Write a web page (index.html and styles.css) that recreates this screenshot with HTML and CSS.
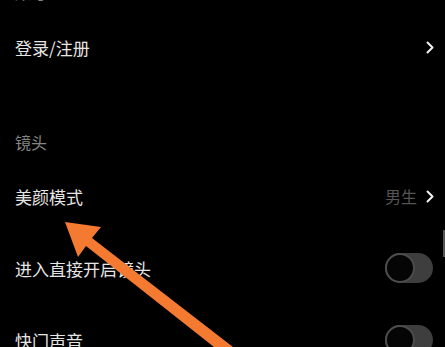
FILE: index.html
```html
<!DOCTYPE html>
<html lang="zh-CN">
<head>
  <meta charset="UTF-8">
  <meta name="viewport" content="width=device-width, initial-scale=1.0">
  <title>设置</title>
  <link rel="stylesheet" href="styles.css">
</head>
<body>
  <div class="settings">
    <div class="section-title top">账号</div>
    <div class="row login">
      <span class="label">登录/注册</span>
      <svg class="chevron" viewBox="0 0 8 13"><path d="M1.5 1.5 L6.5 6.5 L1.5 11.5" /></svg>
    </div>

    <div class="section-title camera">镜头</div>
    <div class="row">
      <span class="label">美颜模式</span>
      <div class="value">
        <span>男生</span>
        <svg class="chevron" viewBox="0 0 8 13"><path d="M1.5 1.5 L6.5 6.5 L1.5 11.5" /></svg>
      </div>
    </div>
    <div class="row">
      <span class="label">进入直接开启镜头</span>
      <div class="toggle"><div class="knob"></div></div>
    </div>
    <div class="row">
      <span class="label">快门声音</span>
      <div class="toggle"><div class="knob"></div></div>
    </div>
  </div>

  <!-- 滚动条 -->
  <div class="scrollbar"></div>

  <!-- 标注箭头 -->
  <svg class="arrow" width="445" height="347" viewBox="0 0 445 347">
    <polygon points="65,222 101,227 92,238 233,347 214,347 86,246 78,257" />
  </svg>
</body>
</html>
```

FILE: styles.css
```css
body {
  margin: 0;
  background: #000;
  font-family: "Noto Sans CJK SC", "Noto Sans", sans-serif;
  color: #e6e6e6;
  overflow: hidden;
  height: 347px;
  position: relative;
}

.settings {
  padding: 0 12px 0 15px;
}

.section-title {
  font-size: 16px;
  color: #858585;
  line-height: 20px;
}

.section-title.top {
  margin-top: -18px;
  height: 20px;
}

.section-title.camera {
  height: 68px;
  display: flex;
  align-items: flex-end;
  padding-bottom: 8px;
  box-sizing: border-box;
}

.row {
  height: 72px;
  display: flex;
  align-items: center;
  justify-content: space-between;
}

.row.login {
  height: 90px;
}

.label {
  font-size: 17px;
}

.value {
  display: flex;
  align-items: center;
  gap: 9px;
  font-size: 16px;
  color: #555;
}

.chevron {
  width: 8px;
  height: 13px;
  margin-right: -1px;
}

.chevron path {
  fill: none;
  stroke: #f2f2f2;
  stroke-width: 2;
  stroke-linecap: round;
  stroke-linejoin: round;
}

.toggle {
  width: 48px;
  height: 30px;
  border-radius: 15px;
  background: #3e3e3e;
  position: relative;
}

.knob {
  position: absolute;
  left: 0;
  top: 0;
  width: 26px;
  height: 26px;
  border-radius: 50%;
  background: #050505;
  border: 2px solid #4c4c4c;
}

.scrollbar {
  position: absolute;
  right: 0;
  top: 230px;
  width: 2px;
  height: 27px;
  background: #555;
}

.arrow {
  position: absolute;
  left: 0;
  top: 0;
}

.arrow polygon {
  fill: #f47a32;
}
```
